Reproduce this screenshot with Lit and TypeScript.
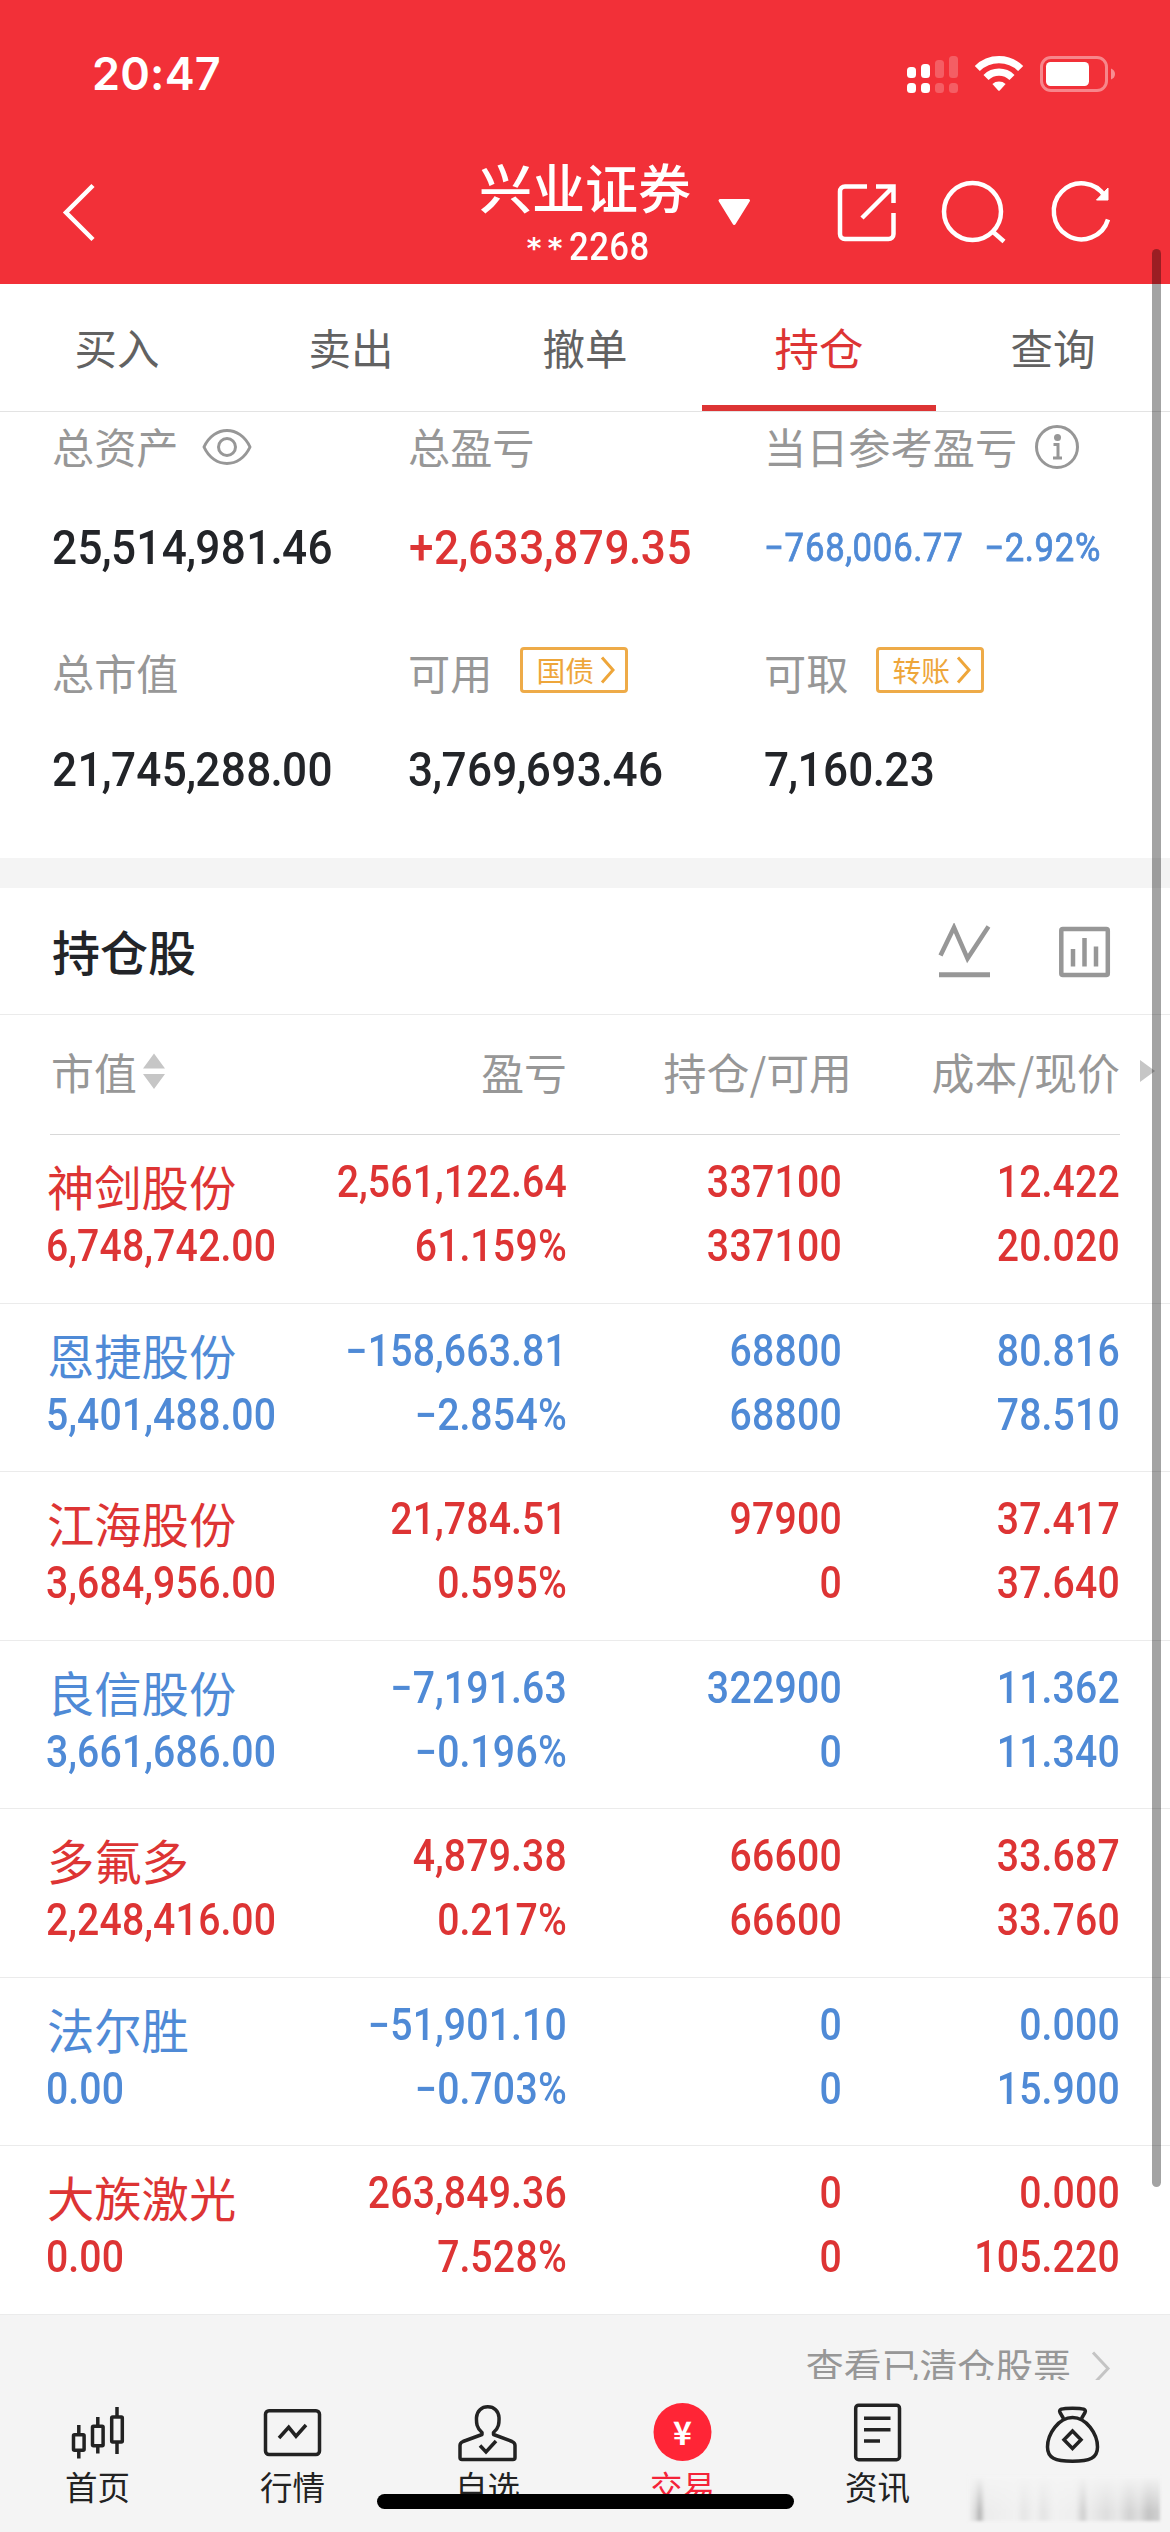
import { LitElement, html, css, svg, nothing } from "lit";
import { customElement, property } from "lit/decorators.js";
import { classMap } from "lit/directives/class-map.js";

interface Holding {
  name: string;
  value: string;
  pnl: string;
  rate: string;
  held: string;
  usable: string;
  cost: string;
  price: string;
}

const HOLDINGS: Holding[] = [
  { name: "神剑股份", value: "6,748,742.00", pnl: "2,561,122.64", rate: "61.159%", held: "337100", usable: "337100", cost: "12.422", price: "20.020" },
  { name: "恩捷股份", value: "5,401,488.00", pnl: "−158,663.81", rate: "−2.854%", held: "68800", usable: "68800", cost: "80.816", price: "78.510" },
  { name: "江海股份", value: "3,684,956.00", pnl: "21,784.51", rate: "0.595%", held: "97900", usable: "0", cost: "37.417", price: "37.640" },
  { name: "良信股份", value: "3,661,686.00", pnl: "−7,191.63", rate: "−0.196%", held: "322900", usable: "0", cost: "11.362", price: "11.340" },
  { name: "多氟多", value: "2,248,416.00", pnl: "4,879.38", rate: "0.217%", held: "66600", usable: "66600", cost: "33.687", price: "33.760" },
  { name: "法尔胜", value: "0.00", pnl: "−51,901.10", rate: "−0.703%", held: "0", usable: "0", cost: "0.000", price: "15.900" },
  { name: "大族激光", value: "0.00", pnl: "263,849.36", rate: "7.528%", held: "0", usable: "0", cost: "0.000", price: "105.220" },
];

/* Separators sit tighter than digits, so each one gets its own span. */
const figure = (text: string) =>
  text.split(/([.,])/).map((part) => (part === "." || part === "," ? html`<span class="sep">${part}</span>` : part));

@customElement("status-bar")
class StatusBar extends LitElement {
  static styles = css`
    :host { display: flex; height: 148px; padding: 0 55px 0 92px; justify-content: space-between; align-items: center; box-sizing: border-box; color: #fff; }
    .time { font: 600 45px/50px Inter, sans-serif; letter-spacing: 0.2px; }
    svg { display: block; }
  `;
  render() {
    return html`
      <span class="time">20:47</span>
      <svg width="210" height="44" viewBox="905 52 210 44" fill="#fff">
        <rect x="907" y="67" width="9" height="11" rx="3.5" />
        <rect x="921" y="64" width="9" height="14" rx="3.5" />
        <rect x="907" y="83" width="9" height="10" rx="3.5" />
        <rect x="921" y="83" width="9" height="10" rx="3.5" />
        <g opacity=".22">
          <rect x="935" y="60" width="9" height="18" rx="3.5" />
          <rect x="949" y="56" width="9" height="22" rx="3.5" />
          <rect x="935" y="83" width="9" height="10" rx="3.5" />
          <rect x="949" y="83" width="9" height="10" rx="3.5" />
        </g>
        <g fill="none" stroke="#fff" stroke-width="7.2">
          <path d="M977.3 68.5a31 31 0 0 1 43.4 0" />
          <path d="M986 77.5a18.6 18.6 0 0 1 26 0" />
        </g>
        <path d="M992.4 84a10 10 0 0 1 13.2 0l-5.6 6.2q-1 1-2 0z" />
        <rect x="1041.5" y="57.500" width="65" height="33" rx="9.500" fill="none" stroke="#fff" stroke-opacity=".42" stroke-width="3" />
        <rect x="1046" y="62" width="43" height="24" rx="4.500" />
        <path d="M1111 68.500q4 1.500 4 5.500t-4 5.500z" opacity=".45" />
      </svg>`;
  }
}

@customElement("nav-header")
class NavHeader extends LitElement {
  static styles = css`
    :host { display: grid; grid-template-columns: 480px 210px 1fr; height: 136px; color: #fff; }
    .back { padding: 34px 0 0 61px; }
    .account { padding-top: 10px; text-align: center; white-space: nowrap; }
    .broker { display: block; font: 500 53px/56px "Noto Sans CJK SC", sans-serif; margin-left: -1px; }
    .number { display: flex; justify-content: center; height: 44px; padding: 10px 0 0 6px; font: 500 38.500px/46px Roboto, sans-serif; }
    .digits { transform: scaleX(0.9); transform-origin: left; letter-spacing: 0.5px; margin-right: -9px; }
    .stars { font: 700 28px/44px "DejaVu Sans", sans-serif; letter-spacing: 6.300px; padding-top: 3px; }
    .tools { padding-top: 30px; }
    svg { display: block; }
  `;
  render() {
    return html`
      <div class="back">
        <svg width="36" height="62" viewBox="61 182 36 62" fill="none" stroke="#fff" stroke-width="4.500"><path d="M93 185.500 66 212.500l27 27" /></svg>
      </div>
      <div class="account">
        <span class="broker">兴业证券</span>
        <span class="number"><span class="stars">**</span><span class="digits">2268</span></span>
      </div>
      <div class="tools">
        <svg width="430" height="70" viewBox="690 178 430 70" fill="none" stroke="#fff" stroke-width="4.500">
          <path d="M720 200.500h28.500L734.200 223.500z" fill="#fff" stroke-width="3" stroke-linejoin="round" />
          <path d="M867 186.500h-22a5 5 0 0 0-5 5v42.500a5 5 0 0 0 5 5h43.500a5 5 0 0 0 5-5V213M876 186.500h17.500V203M893 187 862 218" />
          <circle cx="972.500" cy="211.500" r="28.500" />
          <path d="m992 231 12 10.500" />
          <path d="M1108 219.500a27.700 28 0 1 1-3-23" />
          <path d="M1108 188v12h-11.500z" fill="#fff" stroke-width="1" />
        </svg>
      </div>`;
  }
}

@customElement("trade-tabs")
class TradeTabs extends LitElement {
  static styles = css`
    :host { display: grid; grid-template-columns: repeat(5, 1fr); height: 128px; box-sizing: border-box; background: #fff; border-bottom: 1px solid #e3e3e3; }
    .tab { font: 400 42.500px/125px "Noto Sans CJK SC", sans-serif; text-align: center; color: #626262; height: 127px; box-sizing: border-box; }
    .active { font-size: 44.500px; color: #dd3434; border-bottom: 6px solid #dd3434; }
  `;
  render() {
    return ["买入", "卖出", "撤单", "持仓", "查询"].map(
      (t) => html`<div class=${classMap({ tab: true, active: t === "持仓" })}>${t}</div>`
    );
  }
}

@customElement("asset-summary")
class AssetSummary extends LitElement {
  static styles = css`
    :host { display: grid; grid-template-columns: 356px 356px 1fr; grid-template-rows: 223px 223px; padding-left: 52px; height: 446px; box-sizing: border-box; background: #fff; }
    .cell { white-space: nowrap; }
    .label { display: flex; height: 67px; align-items: center; font: 400 42.200px/60px "Noto Sans CJK SC", sans-serif; color: #979797; }
    .value { display: flex; align-items: center; height: 60px; margin-top: 39px; font: 500 49px/60px Roboto, sans-serif; letter-spacing: 0.4px; color: #222428; transform: scaleX(0.9); transform-origin: left; }
    .sep { margin: 0 -1.200px; }
    .up { color: #dd3434; letter-spacing: 0.65px; padding-left: 1px; }
    .down { color: #4f8ad6; font-size: 38.500px; letter-spacing: 0.9px; font-weight: 400; -webkit-text-stroke: 0.8px #4f8ad6; gap: 23px; }
    .down .sep { margin: 0 -0.300px; }
    .second .label { padding-top: 3px; }
    .second .value { margin-top: 35px; }
    .eye { margin: 2px 0 0 23px; }
    .info { margin: 2px 0 0 17px; }
    .badge { display: flex; align-items: center; gap: 6px; box-sizing: border-box; width: 108px; height: 46px; margin: 0 0 3px 28px; padding-left: 13px; border: 3px solid #eeab48; border-radius: 4px; font-size: 28.800px; line-height: 38px; color: #eea63a; }
  `;
  private badge(text: string) {
    return html`<span class="badge">${text}<svg width="16" height="30" viewBox="0 0 16 30" fill="none" stroke="#eea63a" stroke-width="3"><path d="M2 2.500 13 15 2 27.500" /></svg></span>`;
  }
  render() {
    return html`
      <div class="cell">
        <div class="label">总资产<svg class="eye" width="50" height="42" viewBox="0 0 50 42" fill="none" stroke="#979797" stroke-width="3"><path d="M2 21C12-1 38-1 48 21 38 43 12 43 2 21z" stroke-linejoin="round" /><circle cx="25" cy="21" r="8.500" /></svg></div>
        <div class="value"><span>${figure("25,514,981.46")}</span></div>
      </div>
      <div class="cell">
        <div class="label">总盈亏</div>
        <div class="value up"><span>${figure("+2,633,879.35")}</span></div>
      </div>
      <div class="cell">
        <div class="label">当日参考盈亏<svg class="info" width="46" height="46" viewBox="0 0 46 46" fill="none" stroke="#979797" stroke-width="3"><circle cx="23" cy="23" r="20.500" /><circle cx="23.500" cy="13.500" r="3.500" fill="#979797" stroke="none" /><path d="M19.500 20.500h4.500V34M19 34h9" /></svg></div>
        <div class="value down"><span>${figure("−768,006.77")}</span><span>${figure("−2.92%")}</span></div>
      </div>
      <div class="cell second">
        <div class="label">总市值</div>
        <div class="value"><span>${figure("21,745,288.00")}</span></div>
      </div>
      <div class="cell second">
        <div class="label">可用${this.badge("国债")}</div>
        <div class="value"><span>${figure("3,769,693.46")}</span></div>
      </div>
      <div class="cell second">
        <div class="label">可取${this.badge("转账")}</div>
        <div class="value"><span>${figure("7,160.23")}</span></div>
      </div>`;
  }
}

@customElement("holding-row")
class HoldingRow extends LitElement {
  @property({ attribute: false }) data!: Holding;
  static styles = css`
    :host { display: block; height: 168.570px; box-sizing: border-box; border-bottom: 1.500px solid #ebebeb; }
    .row { display: grid; grid-template-columns: 249px 272px 275px 278px; padding: 26px 0 0 46px; color: #dd3434; white-space: nowrap; }
    .loss { color: #4f8ad6; }
    .num { display: block; height: 64px; font: 500 43.500px/44px Roboto, sans-serif; letter-spacing: 0.3px; transform: scaleX(0.9); transform-origin: left; }
    .sep { margin: 0 -0.300px; }
    .col { text-align: right; }
    .col .num { transform-origin: right; }
    .name { display: block; height: 64px; font: 400 47.300px/50px "Noto Sans CJK SC", sans-serif; padding-left: 1px; }
  `;
  private num(text: string) {
    return html`<span class="num">${figure(text)}</span>`;
  }
  render() {
    const d = this.data;
    return html`<div class=${classMap({ row: true, loss: d.pnl.startsWith("−") })}>
      <div><span class="name">${d.name}</span>${this.num(d.value)}</div>
      <div class="col">${this.num(d.pnl)}${this.num(d.rate)}</div>
      <div class="col">${this.num(d.held)}${this.num(d.usable)}</div>
      <div class="col">${this.num(d.cost)}${this.num(d.price)}</div>
    </div>`;
  }
}

@customElement("holdings-panel")
class HoldingsPanel extends LitElement {
  static styles = css`
    :host { display: block; background: #fff; }
    .title { display: flex; justify-content: space-between; height: 126px; padding: 0 58px 0 52px; align-items: center; border-bottom: 1.500px solid #ebebeb; font: 500 48px/60px "Noto Sans CJK SC", sans-serif; color: #222428; }
    .title span { padding-bottom: 2px; }
    .head { display: grid; grid-template-columns: 246px 270px 285px 268px 1fr; height: 119px; padding-left: 51px; align-items: center; font: 400 42.900px/60px "Noto Sans CJK SC", sans-serif; color: #979797; white-space: nowrap; }
    .head div { padding-bottom: 7px; }
    .first { display: flex; align-items: center; gap: 4px; }
    .right { text-align: right; }
    .more { display: flex; padding-left: 20px; }
    .rule { height: 1px; margin: 0 50px; background: #d8d8d8; }
    svg { display: block; }
  `;
  render() {
    return html`
      <div class="title"><span>持仓股</span>
        <svg width="174" height="56" viewBox="938 922 174 56" fill="none" stroke="#979797" stroke-width="4.500">
          <path d="m940.500 954.500 13.500-28 13.500 31 21-32" /><path d="M939 973.700h51" stroke-width="5" />
          <rect x="1061.300" y="928" width="46.500" height="46" rx="1.500" /><path d="M1073 948v17.500M1084.500 937v28.500M1096 945.500v20" />
        </svg>
      </div>
      <div class="head">
        <div class="first">市值<svg width="26" height="38" viewBox="0 0 26 38" fill="#c6c6c6"><path d="m2 16.500 11-15 11 15zM2 22h22L13 37z" /></svg></div>
        <div class="right">盈亏</div>
        <div class="right">持仓/可用</div>
        <div class="right">成本/现价</div>
        <div class="more"><svg width="16" height="22" viewBox="0 0 16 22" fill="#c6c6c6"><path d="m0 0 15 11L0 22z" /></svg></div>
      </div>
      <div class="rule"></div>
      ${HOLDINGS.map((h) => html`<holding-row .data=${h}></holding-row>`)}`;
  }
}

const ICONS = {
  home: svg`<path d="M10.800 23v9M10.800 49v7.500M29.800 15v9M29.800 44v7.500M49 5v9M49 41v11"/><rect x="5.500" y="32.700" width="10.600" height="15.600" rx="1"/><rect x="24.500" y="24.200" width="10.600" height="19.600" rx="1"/><rect x="43.700" y="15" width="10.600" height="25" rx="1"/>`,
  quote: svg`<rect x="2.500" y="8.700" width="54" height="43.800" rx="3.500"/><path d="M16 36 25.700 25.300l7.300 8.900 10-11.200"/>`,
  mine: svg`<path d="M24 30.500C18.500 26 18.300 21 18.500 15.500 19 9 23.500 4.800 29.800 4.800S40.600 9 41 15.500C41.200 21 41 26 35.500 30.500v2L54 39.500q3 1.300 3 4V55.500q0 2-2 2H4q-2 0-2-2V43.500q0-2.700 3-4L24 32.500z" stroke-linejoin="round"/><path d="m22 43.500 6 6.500 10-11"/>`,
  trade: svg`<circle cx="29.500" cy="30" r="29" fill="#ff2536" stroke="none"/>`,
  news: svg`<rect x="7.700" y="3.200" width="43.800" height="54.500" rx="3"/><path d="M16 16.300h26.500M16 27.700h26.500M16 39h16"/>`,
  assets: svg`<path d="M20.500 16.500 17 10.500C15.500 7.500 18 6.200 29.500 6.200S43.500 7.500 42 10.500L38.500 16.500" stroke-linejoin="round"/><path d="M29.500 15.500c14 0 25 16.500 25 29.500 0 11-7.500 14.200-25 14.200S4.500 56 4.500 45c0-13 11-29.500 25-29.500z"/><path d="m29.500 29 8.500 8.700-8.500 8.700-8.500-8.700z"/>`,
};

@customElement("bottom-nav")
class BottomNav extends LitElement {
  static styles = css`
    :host { display: grid; grid-template-columns: repeat(6, 195px); height: 153px; background: #f4f4f4; position: relative; color: #222; }
    .item { display: flex; flex-direction: column; align-items: center; padding-top: 22px; height: 131px; }
    .icon { display: grid; place-items: center; width: 59px; height: 62px; }
    .icon svg, .icon b { grid-area: 1 / 1; }
    .yen { font: 700 32px/40px "Noto Sans CJK SC", sans-serif; color: #fff; padding-bottom: 4px; }
    .text { font: 400 32.500px/44px "Noto Sans CJK SC", sans-serif; }
    .active { color: #f42338; }
    .indicator { position: absolute; left: 377px; top: 114px; width: 417px; height: 15px; border-radius: 8px; background: #000; }
    .smudge { position: absolute; left: 968px; top: 96px; width: 192px; height: 45px; filter: blur(1.5px); background: linear-gradient(#f4f4f4, transparent 80%), linear-gradient(90deg, #f4f4f4 0%, #d8d8d8 4%, #b4b4b4 6%, #ececec 9%, #f1f1f1 25%, #e6e6e6 29%, #f1f1f1 35%, #e4e4e4 39%, #f1f1f1 45%, #eee 56%, #cfcfcf 60%, #ececec 63%, #dedede 72%, #e8e8e8 78%, #d2d2d2 84%, #dedede 89%, #c4c4c4 94%, #d0d0d0 100%); }
  `;
  render() {
    const items: [keyof typeof ICONS, string][] = [
      ["home", "首页"], ["quote", "行情"], ["mine", "自选"], ["trade", "交易"], ["news", "资讯"], ["assets", ""],
    ];
    return html`${items.map(
      ([key, label]) => html`<div class=${classMap({ item: true, active: key === "trade" })}>
        <div class="icon"><svg width="59" height="62" viewBox="0 0 59 62" fill="none" stroke="#222" stroke-width="3.500">${ICONS[key]}</svg>${key === "trade" ? html`<b class="yen">¥</b>` : nothing}</div>
        <span class="text">${label}</span>
      </div>`
    )}
      <div class="smudge"></div>
      <div class="indicator"></div>`;
  }
}

@customElement("app-root")
class AppRoot extends LitElement {
  static styles = css`
    :host { display: block; position: relative; width: 1170px; height: 2532px; overflow: hidden; background: #f4f4f4; }
    .top { background: #f23038; height: 284px; }
    .gap { height: 30px; background: #f4f4f4; }
    .closed { display: flex; justify-content: flex-end; gap: 20px; height: 65px; padding-right: 59px; overflow: hidden; font: 400 37.900px/60px "Noto Sans CJK SC", sans-serif; color: #979797; }
    .closed span { padding-top: 20px; }
    .closed svg { flex: none; margin-top: 34px; }
    .scroll { position: absolute; left: 1152px; top: 249px; width: 9px; height: 1938px; border-radius: 5px; background: rgba(0, 0, 0, 0.36); }
  `;
  render() {
    return html`
      <div class="top"><status-bar></status-bar><nav-header></nav-header></div>
      <trade-tabs></trade-tabs>
      <asset-summary></asset-summary>
      <div class="gap"></div>
      <holdings-panel></holdings-panel>
      <div class="closed"><span>查看已清仓股票</span><svg width="20" height="40" viewBox="0 0 20 40" fill="none" stroke="#c4c4c4" stroke-width="3"><path d="M2 3.500 17 19.500 2 35.500" /></svg></div>
      <bottom-nav></bottom-nav>
      <div class="scroll"></div>`;
  }
}
